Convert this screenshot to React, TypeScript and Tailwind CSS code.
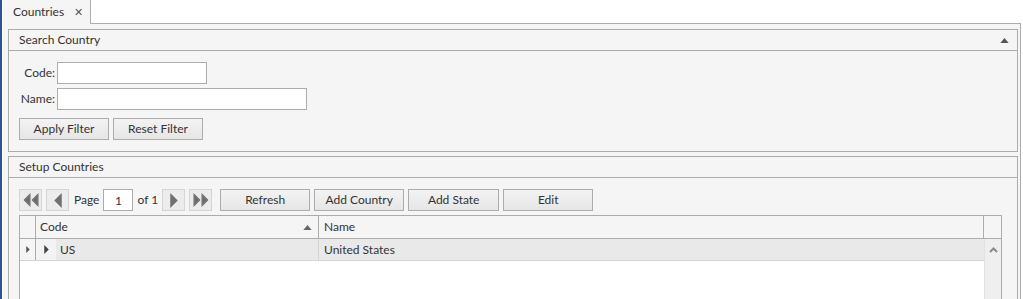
const BORDER = "border-[#acacac]";

function Tri({ dir, className = "" }: { dir: "up" | "left" | "right"; className?: string }) {
  const pts = dir === "up" ? "0,6 5,0 10,6" : dir === "left" ? "6,0 6,12 0,6" : "0,0 0,12 6,6";
  const vb = dir === "up" ? "0 0 10 6" : "0 0 6 12";
  return (
    <svg viewBox={vb} className={className} aria-hidden="true">
      <polygon points={pts} fill="currentColor" />
    </svg>
  );
}

function Btn({ children, w = "w-[90px]" }: { children: React.ReactNode; w?: string }) {
  return (
    <button
      className={`${w} h-[22px] border ${BORDER} bg-gradient-to-b from-[#f3f3f3] to-[#e6e6e6] text-[12px] text-[#333] leading-none`}
    >
      {children}
    </button>
  );
}

function PagerBtn({ kind }: { kind: "first" | "prev" | "next" | "last" }) {
  return (
    <div className="w-[23px] h-[22px] border border-[#d4d4d4] bg-[#ececec] flex items-center justify-center text-[#707070]">
      {kind === "first" && (
        <div className="flex">
          <Tri dir="left" className="w-[8px] h-[14px]" />
          <Tri dir="left" className="w-[8px] h-[14px]" />
        </div>
      )}
      {kind === "prev" && <Tri dir="left" className="w-[8px] h-[15px]" />}
      {kind === "next" && <Tri dir="right" className="w-[8px] h-[15px]" />}
      {kind === "last" && (
        <div className="flex">
          <Tri dir="right" className="w-[8px] h-[14px]" />
          <Tri dir="right" className="w-[8px] h-[14px]" />
        </div>
      )}
    </div>
  );
}

function PanelHeader({ title, collapse }: { title: string; collapse?: boolean }) {
  return (
    <div className={`h-[21px] border-b ${BORDER} flex items-center pl-[10px] pr-[8px] shrink-0`}>
      <span className="flex-1">{title}</span>
      {collapse && <Tri dir="up" className="w-[9px] h-[5px] text-[#555]" />}
    </div>
  );
}

export default function App() {
  return (
    <div
      className="w-[1023px] h-[299px] overflow-hidden bg-white border-l-2 border-[#2b579a] flex flex-col text-[12px] text-[#333]"
      style={{ fontFamily: "Lato, 'Noto Sans', sans-serif" }}
    >
      {/* tab strip */}
      <div className="h-[24px] flex shrink-0">
        <div className={`ml-[1px] w-[88px] bg-[#f5f5f5] border-r ${BORDER} flex items-center pl-[10px] gap-[10px]`}>
          <span>Countries</span>
          <span className="text-[11px] text-[#555]">✕</span>
        </div>
        <div className={`flex-1 border-b ${BORDER}`} />
        <div className="w-[2px]" />
      </div>

      {/* content */}
      <div className={`flex-1 min-h-0 mr-[2px] ml-[1px] border-r ${BORDER} bg-[#f5f5f5] pt-[5px] pl-[5px] pr-[2px] flex flex-col gap-[4px]`}>
        <div className={`border ${BORDER} bg-[#f5f5f5] shrink-0`}>
          <PanelHeader title="Search Country" collapse />
          <div className="pt-[11px] pb-[11px] pl-[10px]">
            <div className="grid grid-cols-[38px_auto] gap-y-[4px] items-center w-max">
              <span className="text-right pr-[2px]">Code:</span>
              <input className={`w-[150px] h-[22px] border ${BORDER} bg-white`} />
              <span className="text-right pr-[2px]">Name:</span>
              <input className={`w-[250px] h-[22px] border ${BORDER} bg-white`} />
            </div>
            <div className="flex gap-[4px] mt-[8px]">
              <Btn>Apply Filter</Btn>
              <Btn>Reset Filter</Btn>
            </div>
          </div>
        </div>

        <div className={`flex-1 min-h-0 border ${BORDER} border-b-0 bg-[#f5f5f5] flex flex-col`}>
          <PanelHeader title="Setup Countries" />
          <div className="flex-1 min-h-0 pt-[11px] pl-[10px] pr-[15px] flex flex-col">
            <div className="flex items-center h-[22px] shrink-0">
              <PagerBtn kind="first" />
              <div className="w-[4px]" />
              <PagerBtn kind="prev" />
              <span className="ml-[5px] mr-[4px]">Page</span>
              <input
                defaultValue="1"
                className={`w-[30px] h-[22px] border ${BORDER} bg-white text-center text-[12px]`}
              />
              <span className="ml-[4px] mr-[4px]">of 1</span>
              <PagerBtn kind="next" />
              <div className="w-[4px]" />
              <PagerBtn kind="last" />
              <div className="w-[8px]" />
              <div className="flex gap-[4px]">
                <Btn>Refresh</Btn>
                <Btn>Add Country</Btn>
                <Btn w="w-[91px]">Add State</Btn>
                <Btn>Edit</Btn>
              </div>
            </div>

            <div className={`mt-[4px] flex-1 min-h-0 border ${BORDER} border-b-0 bg-white flex flex-col`}>
              <div className={`h-[23px] flex border-b ${BORDER} bg-[#f5f5f5] shrink-0`}>
                <div className={`w-[16px] border-r ${BORDER}`} />
                <div className={`w-[283px] border-r ${BORDER} flex items-center pl-[4px] pr-[6px]`}>
                  <span className="flex-1">Code</span>
                  <Tri dir="up" className="w-[9px] h-[5px] text-[#666]" />
                </div>
                <div className={`flex-1 border-r ${BORDER} flex items-center pl-[5px]`}>Name</div>
                <div className="w-[17px]" />
              </div>
              <div className="flex-1 flex min-h-0">
                <div className="flex-1 flex flex-col">
                  <div className="h-[22px] flex border-b border-[#d4d4d4] bg-[#e9e9e9]">
                    <div className={`w-[16px] border-r ${BORDER} bg-[#f5f5f5] flex items-center justify-center`}>
                      <Tri dir="right" className="w-[4px] h-[7px] text-[#555]" />
                    </div>
                    <div className="w-[20px] bg-[#f3f3f3] flex items-center justify-center">
                      <Tri dir="right" className="w-[5px] h-[9px] text-[#444]" />
                    </div>
                    <div className="w-[263px] border-r border-[#d4d4d4] flex items-center pl-[4px]">US</div>
                    <div className="flex-1 flex items-center pl-[5px]">United States</div>
                  </div>
                  <div className="flex-1 bg-white" />
                </div>
                <div className="w-[17px] bg-[#efefef] border-l border-[#e2e2e2] flex justify-center pt-[8px]">
                  <svg viewBox="0 0 9 6" className="w-[9px] h-[6px]" aria-hidden="true">
                    <path d="M1 5 L4.5 1.5 L8 5" fill="none" stroke="#8a8a8a" strokeWidth="2" />
                  </svg>
                </div>
              </div>
            </div>
          </div>
        </div>
      </div>
    </div>
  );
}
